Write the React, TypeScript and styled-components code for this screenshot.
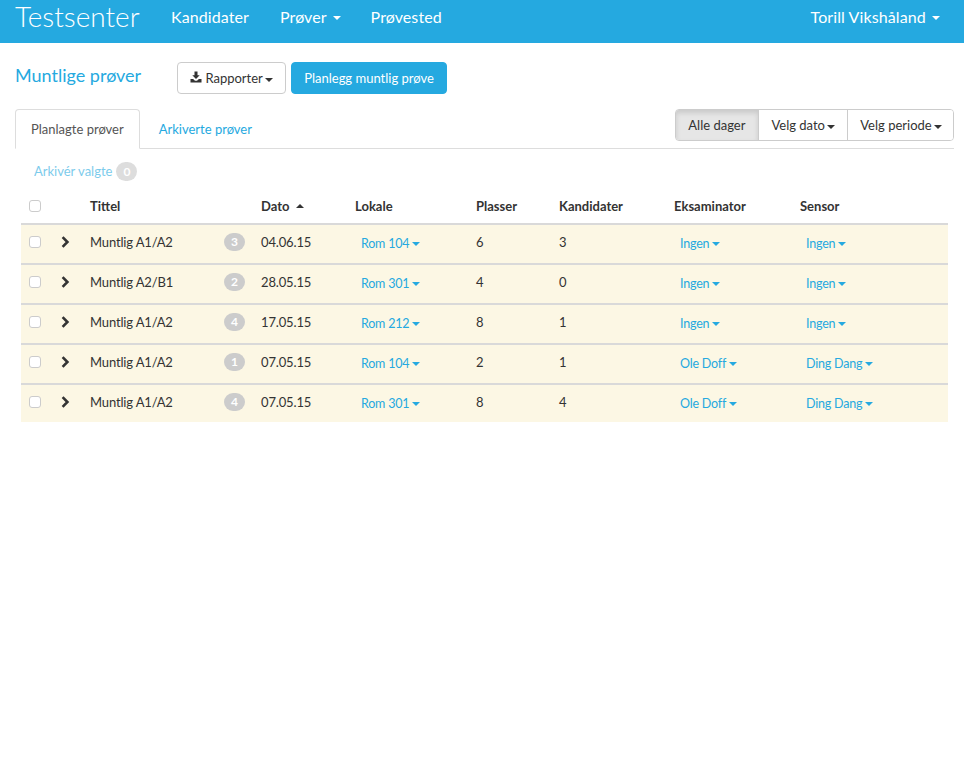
import React from 'react';
import styled, {createGlobalStyle} from "styled-components";

const blue = '#25a9e0';

const GlobalStyle = createGlobalStyle`
  html, body {
    margin: 0;
    background: #fff;
    font-family: Lato, "Liberation Sans", sans-serif;
    font-size: 13px;
    line-height: 20px;
    color: #333;
  }
`

type Row = {
    title: string
    count: number
    date: string
    room: string
    seats: number
    candidates: number
    examiner: string
    sensor: string
}

const rows: Row[] = [
    {title: 'Muntlig A1/A2', count: 3, date: '04.06.15', room: 'Rom 104', seats: 6, candidates: 3, examiner: 'Ingen', sensor: 'Ingen'},
    {title: 'Muntlig A2/B1', count: 2, date: '28.05.15', room: 'Rom 301', seats: 4, candidates: 0, examiner: 'Ingen', sensor: 'Ingen'},
    {title: 'Muntlig A1/A2', count: 4, date: '17.05.15', room: 'Rom 212', seats: 8, candidates: 1, examiner: 'Ingen', sensor: 'Ingen'},
    {title: 'Muntlig A1/A2', count: 1, date: '07.05.15', room: 'Rom 104', seats: 2, candidates: 1, examiner: 'Ole Doff', sensor: 'Ding Dang'},
    {title: 'Muntlig A1/A2', count: 4, date: '07.05.15', room: 'Rom 301', seats: 8, candidates: 4, examiner: 'Ole Doff', sensor: 'Ding Dang'},
];

const columnWidths = [32, 29, 134, 37, 94, 121, 83, 115, 126, 156];

function DownloadIcon() {
    return (
        <svg width="12" height="12" viewBox="0 0 12 12" aria-hidden="true">
            <path fill="currentColor" d="M4.5 0.5h3v3.7h2.2L6 8 2.3 4.2h2.2z" />
            <path fill="currentColor" d="M0.5 8h2.6L5 9.8h2L8.9 8h2.6v3.5H0.5z" />
        </svg>
    );
}

function ChevronIcon() {
    return (
        <svg width="9" height="12" viewBox="0 0 9 12" aria-hidden="true">
            <path fill="none" stroke="#333" strokeWidth="2.6" d="M1.6 1.2 6.4 6 1.6 10.8" />
        </svg>
    );
}

function App() {
    return (
        <>
            <GlobalStyle />
            <Navbar>
                <Brand>Testsenter</Brand>
                <NavLink>Kandidater</NavLink>
                <NavLink>Prøver <NavCaret /></NavLink>
                <NavLink>Prøvested</NavLink>
                <UserLink>Torill Vikshåland <NavCaret /></UserLink>
            </Navbar>
            <Page>
                <TitleRow>
                    <Title>Muntlige prøver</Title>
                    <DefaultButton><DownloadIcon /> Rapporter <Caret /></DefaultButton>
                    <PrimaryButton>Planlegg muntlig prøve</PrimaryButton>
                </TitleRow>
                <TabBar>
                    <Tab $active>Planlagte prøver</Tab>
                    <Tab>Arkiverte prøver</Tab>
                    <ButtonGroup>
                        <GroupButton $active>Alle dager</GroupButton>
                        <GroupButton>Velg dato <Caret /></GroupButton>
                        <GroupButton>Velg periode <Caret /></GroupButton>
                    </ButtonGroup>
                </TabBar>
                <ArchiveRow>
                    <ArchiveLink>Arkivér valgte</ArchiveLink>
                    <ArchiveBadge>0</ArchiveBadge>
                </ArchiveRow>
                <Table>
                    <colgroup>
                        {columnWidths.map((w, i) => <col key={i} width={w} />)}
                    </colgroup>
                    <thead>
                        <tr>
                            <Th><Checkbox /></Th>
                            <Th />
                            <Th>Tittel</Th>
                            <Th />
                            <Th>Dato <SortCaret /></Th>
                            <Th>Lokale</Th>
                            <Th>Plasser</Th>
                            <Th>Kandidater</Th>
                            <Th>Eksaminator</Th>
                            <Th>Sensor</Th>
                        </tr>
                    </thead>
                    <tbody>
                        {rows.map((row, i) => (
                            <tr key={i}>
                                <Td><Checkbox /></Td>
                                <Td><ChevronCell><ChevronIcon /></ChevronCell></Td>
                                <Td>{row.title}</Td>
                                <Td><CountBadge>{row.count}</CountBadge></Td>
                                <Td>{row.date}</Td>
                                <Td><DropLink>{row.room} <DropCaret /></DropLink></Td>
                                <Td>{row.seats}</Td>
                                <Td>{row.candidates}</Td>
                                <Td><DropLink>{row.examiner} <DropCaret /></DropLink></Td>
                                <Td><DropLink>{row.sensor} <DropCaret /></DropLink></Td>
                            </tr>
                        ))}
                    </tbody>
                </Table>
            </Page>
        </>
    );
}

const Caret = styled.span`
  display: inline-block;
  width: 0;
  height: 0;
  margin-left: -1px;
  vertical-align: middle;
  border-top: 4px solid currentColor;
  border-left: 4px solid transparent;
  border-right: 4px solid transparent;
`

const NavCaret = styled(Caret)`
  margin-left: 2px;
`

const DropCaret = styled(Caret)`
  margin-left: 0;
`

const SortCaret = styled.span`
  display: inline-block;
  width: 0;
  height: 0;
  margin-left: 3px;
  vertical-align: 3px;
  border-bottom: 4px solid #333;
  border-left: 4px solid transparent;
  border-right: 4px solid transparent;
`

const Navbar = styled.nav`
  display: flex;
  align-items: center;
  box-sizing: border-box;
  height: 43px;
  padding: 0 24px 11px 15px;
  background: ${blue};
  color: #fff;
`

const Brand = styled.a`
  width: 156px;
  font-size: 28px;
  font-weight: 300;
  line-height: 37px;
`

const NavLink = styled.a`
  margin-right: 30px;
  font-size: 16px;
  letter-spacing: 0.1px;
  line-height: 35px;

  &:nth-child(2) {
    margin-right: 31px;
  }
`

const UserLink = styled(NavLink)`
  margin: 0 0 0 auto;
`

const Page = styled.main`
  padding: 0 10px 0 15px;
`

const TitleRow = styled.div`
  display: flex;
  align-items: flex-start;
  padding-top: 19px;
  height: 66px;
  box-sizing: border-box;
`

const Title = styled.h2`
  width: 162px;
  margin: 0;
  font-size: 18px;
  font-weight: 400;
  line-height: 26px;
  color: ${blue};
`

const DefaultButton = styled.button`
  height: 32px;
  width: 109px;
  padding: 0;
  border: 1px solid #ccc;
  border-radius: 4px;
  background: #fff;
  color: #333;
  font: inherit;
`

const PrimaryButton = styled.button`
  height: 32px;
  width: 156px;
  margin-left: 5px;
  padding: 0;
  border: 1px solid ${blue};
  border-radius: 4px;
  background: ${blue};
  color: #fff;
  font: inherit;
`

const TabBar = styled.div`
  display: flex;
  align-items: flex-start;
  height: 40px;
  border-bottom: 1px solid #ddd;
  box-sizing: border-box;
`

const Tab = styled.a<{$active?: boolean}>`
  box-sizing: border-box;
  height: 40px;
  padding: 9px 15px 0;
  margin-right: 3px;
  border: 1px solid ${p => p.$active ? '#ddd' : 'transparent'};
  border-bottom-color: ${p => p.$active ? '#fff' : 'transparent'};
  border-radius: 4px 4px 0 0;
  background: ${p => p.$active ? '#fff' : 'transparent'};
  color: ${p => p.$active ? '#555' : blue};
`

const ButtonGroup = styled.div`
  display: flex;
  height: 32px;
  margin-left: auto;
  box-sizing: border-box;
  border: 1px solid #ccc;
  border-radius: 4px;
  overflow: hidden;
`

const GroupButton = styled.button<{$active?: boolean}>`
  padding: 0 12px;
  border: 0;
  border-left: 1px solid #ccc;
  background: ${p => p.$active ? '#e6e6e6' : '#fff'};
  box-shadow: ${p => p.$active ? 'inset 0 3px 5px rgba(0,0,0,.125)' : 'none'};
  color: #333;
  font: inherit;

  &:first-child {
    padding-right: 13px;
    border-left: 0;
  }

  &:last-child {
    padding-right: 11px;
  }
`

const ArchiveRow = styled.div`
  display: flex;
  align-items: center;
  gap: 4px;
  height: 20px;
  margin: 12px 0 0 19px;
`

const ArchiveLink = styled.a`
  color: ${blue};
  opacity: 0.6;
`

const ArchiveBadge = styled.span`
  min-width: 7px;
  padding: 0 7px;
  border-radius: 10px;
  background: #ddd;
  color: #fff;
  font-size: 12px;
  font-weight: 700;
  line-height: 19px;
  text-align: center;
`

const Table = styled.table`
  width: 927px;
  margin: 8px 0 0 6px;
  table-layout: fixed;
  border-collapse: separate;
  border-spacing: 0;
`

const Th = styled.th`
  height: 36px;
  padding: 0 8px;
  box-sizing: border-box;
  border-bottom: 2px solid #d9d9d9;
  color: #333;
  font-weight: 700;
  text-align: left;
  white-space: nowrap;
`

const Td = styled.td`
  height: 40px;
  padding: 0 8px 4px;
  box-sizing: border-box;
  border-top: 2px solid #d9d9d9;
  background: #fcf7e4;
  letter-spacing: -0.15px;
  white-space: nowrap;

  tbody tr:first-child > & {
    height: 38px;
    border-top: 0;
  }

  tbody tr:last-child > & {
    height: 39px;
    padding-bottom: 3px;
  }
`

const Checkbox = styled.span`
  display: block;
  box-sizing: border-box;
  width: 12px;
  height: 12px;
  border: 1px solid #ccc;
  border-radius: 3px;
  background: #fff;
`

const ChevronCell = styled.span`
  display: flex;
`

const CountBadge = styled.span`
  display: block;
  width: 21px;
  border-radius: 10px;
  background: #ccc;
  color: #fff;
  font-size: 12px;
  font-weight: 700;
  line-height: 18px;
  text-align: center;
`

const DropLink = styled.a`
  display: inline-block;
  padding: 3px 6px 0;
  color: ${blue};
  font-size: 12.5px;
  letter-spacing: -0.2px;
`

export default App;
